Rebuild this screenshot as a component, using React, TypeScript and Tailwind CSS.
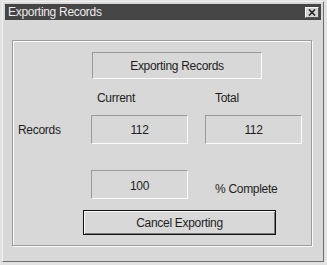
import React from "react";

const sunken =
  "border border-t-[#9a9a9a] border-l-[#9a9a9a] border-r-[#fbfbfb] border-b-[#fbfbfb] flex items-center justify-center";

export default function App() {
  return (
    <div
      className="w-[327px] h-[265px] bg-[#e2e2e2] pt-[1px] pl-[2px] text-[12px] tracking-[-0.3px] text-[#1e1e1e]"
      style={{ fontFamily: '"Liberation Sans", Arial, sans-serif' }}
    >
      <div className="w-[322px] h-[261px] bg-[#d8d8d8] border border-t-[#f2f2f2] border-l-[#f2f2f2] border-r-[#6e6e6e] border-b-[#6e6e6e] p-[2px] flex flex-col">
        <div className="h-[16px] bg-[#454545] flex items-center justify-between pl-[3px] pr-[2px] text-[#ececec]">
          <span className="leading-none">Exporting Records</span>
          <div className="w-[14px] h-[11px] bg-[#d4d4d4] border border-t-[#f4f4f4] border-l-[#f4f4f4] border-r-[#555] border-b-[#555] flex items-center justify-center">
            <svg width="8" height="7" viewBox="0 0 8 7">
              <path d="M1 0.5 L7 6.5 M7 0.5 L1 6.5" stroke="#222" strokeWidth="1.6" />
            </svg>
          </div>
        </div>
        <div className="flex-1 pt-[20px] pl-[7px]">
          <div className="w-[300px] h-[206px] border border-[#9c9c9c] shadow-[1px_1px_0_#fbfbfb,inset_1px_1px_0_#fbfbfb] flex flex-col">
            <div className={`${sunken} mt-[11px] ml-[79px] w-[170px] h-[27px]`}>Exporting Records</div>
            <div className="mt-[12px] h-[14px] flex items-center">
              <span className="ml-[84px] w-[118px]">Current</span>
              <span>Total</span>
            </div>
            <div className="mt-[10px] flex items-center">
              <span className="ml-[5px] w-[73px]">Records</span>
              <div className={`${sunken} w-[97px] h-[29px]`}>112</div>
              <div className={`${sunken} ml-[17px] w-[97px] h-[29px]`}>112</div>
            </div>
            <div className="mt-[26px] flex items-center">
              <div className={`${sunken} ml-[78px] w-[97px] h-[29px] pt-[2px]`}>100</div>
              <span className="ml-[27px] mt-[8px]">% Complete</span>
            </div>
            <div className="mt-[11px] ml-[70px] w-[193px] h-[25px] border border-[#111] bg-[#d8d8d8] shadow-[inset_1px_1px_0_#fbfbfb,inset_-1px_-1px_0_#7a7a7a] flex items-center justify-center">
              Cancel Exporting
            </div>
          </div>
        </div>
      </div>
    </div>
  );
}
